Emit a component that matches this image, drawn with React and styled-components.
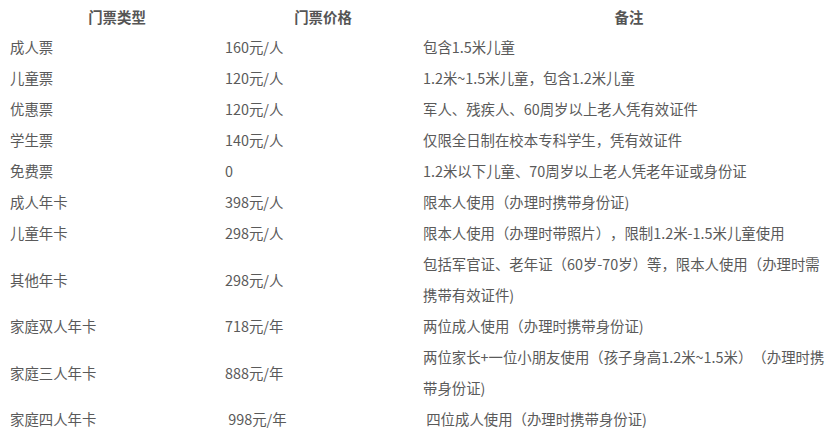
import React from 'react';
import styled, { createGlobalStyle } from 'styled-components';

const GlobalStyle = createGlobalStyle`
  html, body {
    margin: 0;
    padding: 0;
    background: #ffffff;
  }
  body {
    font-family: 'Noto Sans CJK SC', 'Noto Sans', sans-serif;
  }
`;

const COLUMNS = '215px 198px 423px';

const Table = styled.div`
  width: 836px;
  display: grid;
  grid-template-columns: ${COLUMNS};
  color: #5a5a5a;
  font-size: 14.4px;
  text-spacing-trim: space-all;
`;

const HeaderCell = styled.div`
  height: 31px;
  padding-top: 2px;
  padding-left: ${p => p.$pad}px;
  box-sizing: border-box;
  line-height: 29px;
  text-align: center;
  font-weight: 700;
  color: #555;
`;

const Cell = styled.div`
  line-height: 31px;
  padding: 0 3px 0 10px;
  box-sizing: border-box;
  display: flex;
  align-items: center;
`;

const headers = [
  { label: '门票类型', pad: 19 },
  { label: '门票价格', pad: 18 },
  { label: '备注', pad: 9 },
];

const tickets = [
  ['成人票', '160元/人', '包含1.5米儿童'],
  ['儿童票', '120元/人', '1.2米~1.5米儿童，包含1.2米儿童'],
  ['优惠票', '120元/人', '军人、残疾人、60周岁以上老人凭有效证件'],
  ['学生票', '140元/人', '仅限全日制在校本专科学生，凭有效证件'],
  ['免费票', '0', '1.2米以下儿童、70周岁以上老人凭老年证或身份证'],
  ['成人年卡', '398元/人', '限本人使用（办理时携带身份证)'],
  ['儿童年卡', '298元/人', '限本人使用（办理时带照片），限制1.2米-1.5米儿童使用'],
  ['其他年卡', '298元/人', '包括军官证、老年证（60岁-70岁）等，限本人使用（办理时需携带有效证件)'],
  ['家庭双人年卡', '718元/年', '两位成人使用（办理时携带身份证)'],
  ['家庭三人年卡', '888元/年', '两位家长+一位小朋友使用（孩子身高1.2米~1.5米）（办理时携带身份证)'],
  ['家庭四人年卡', '\u00a0998元/年', '\u00a0四位成人使用（办理时携带身份证)'],
];

export default function App() {
  return (
    <>
      <GlobalStyle />
      <Table>
        {headers.map(h => (
          <HeaderCell key={h.label} $pad={h.pad}>{h.label}</HeaderCell>
        ))}
        {tickets.map(row =>
          row.map((text, i) => <Cell key={row[0] + i}>{text}</Cell>)
        )}
      </Table>
    </>
  );
}
